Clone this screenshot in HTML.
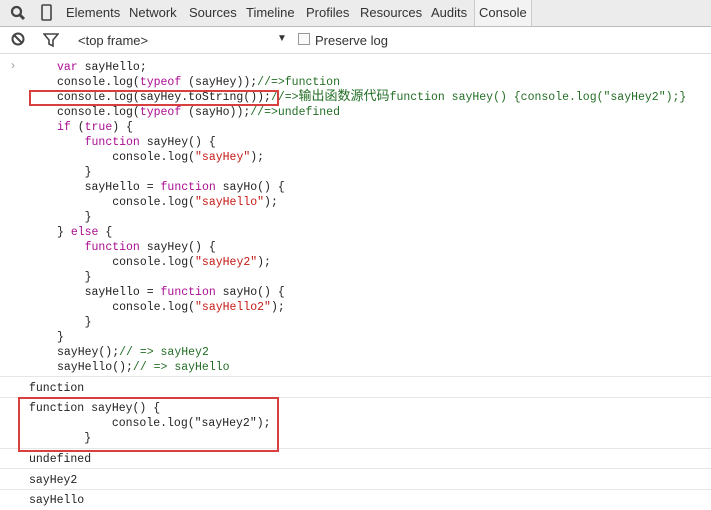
<!DOCTYPE html><html><head><style>
body{margin:0;width:711px;height:505px;overflow:hidden;background:#fff;font-family:"Liberation Sans",sans-serif;position:relative}
.tab{position:absolute;top:0;left:0;width:711px;height:26px;background:#ececec;border-bottom:1px solid #bcbcbc}
.tab span{position:absolute;top:5px;font-size:13px;color:#333}
.tb{position:absolute;top:27px;left:0;width:711px;height:26px;border-bottom:1px solid #ddd}
pre{margin:0;font-family:"Liberation Mono",monospace;font-size:11.5px;line-height:15px;color:#222}
.k{color:#aa0d91}.c{color:#236e25}.s{color:#c41a16}
.z{font-family:"Noto Sans CJK SC",sans-serif;font-size:13px;line-height:0}
.code{position:absolute;left:57px;top:60px}
.row{position:absolute;left:0;width:711px;border-top:1px solid #e6e6e6}
.row pre{position:absolute;left:29px}
.box{position:absolute;border:2px solid #d84040}
</style></head><body>
<div class="tab">
<svg style="position:absolute;left:10px;top:5px" width="16" height="16"><circle cx="6.5" cy="6.5" r="4.5" fill="none" stroke="#444" stroke-width="2.2"/><line x1="10" y1="10" x2="14" y2="14" stroke="#444" stroke-width="3"/></svg>
<svg style="position:absolute;left:41px;top:4px" width="12" height="18"><rect x="1" y="1" width="9" height="15" rx="1" fill="none" stroke="#444" stroke-width="1.6"/></svg>
<span style="left:66px">Elements</span><span style="left:129px">Network</span><span style="left:189px">Sources</span><span style="left:246px">Timeline</span><span style="left:306px">Profiles</span><span style="left:360px">Resources</span><span style="left:431px">Audits</span>
<div style="position:absolute;left:474px;top:0;width:56px;height:26px;background:#f3f3f3;border-left:1px solid #ccc;border-right:1px solid #ccc"></div><span style="left:479px">Console</span>
</div>
<div class="tb">
<svg style="position:absolute;left:11px;top:5px" width="16" height="16"><circle cx="7" cy="7" r="5.5" fill="none" stroke="#444" stroke-width="2"/><line x1="3" y1="3" x2="11" y2="11" stroke="#444" stroke-width="2"/></svg>
<svg style="position:absolute;left:43px;top:5px" width="16" height="16"><path d="M1 2H15L10 8V14L6 12V8Z" fill="none" stroke="#444" stroke-width="1.6"/></svg>
<span style="position:absolute;left:78px;top:6px;font-size:13px;color:#333">&lt;top frame&gt;</span>
<span style="position:absolute;left:277px;top:6px;font-size:10px;color:#333">▼</span>
<div style="position:absolute;left:298px;top:6px;width:10px;height:10px;border:1px solid #999;background:#fafafa"></div>
<span style="position:absolute;left:315px;top:6px;font-size:13px;color:#333">Preserve log</span>
</div>
<span style="position:absolute;left:11px;top:58px;color:#999;font-size:12px">›</span>
<pre class="code"><span class="k">var</span> sayHello;
console.log(<span class="k">typeof</span> (sayHey));<span class="c">//=>function</span>
console.log(sayHey.toString());<span class="c">//=><span class="z">输出函数源代码</span>function sayHey() {console.log("sayHey2");}</span>
console.log(<span class="k">typeof</span> (sayHo));<span class="c">//=>undefined</span>
<span class="k">if</span> (<span class="k">true</span>) {
    <span class="k">function</span> sayHey() {
        console.log(<span class="s">"sayHey"</span>);
    }
    sayHello = <span class="k">function</span> sayHo() {
        console.log(<span class="s">"sayHello"</span>);
    }
} <span class="k">else</span> {
    <span class="k">function</span> sayHey() {
        console.log(<span class="s">"sayHey2"</span>);
    }
    sayHello = <span class="k">function</span> sayHo() {
        console.log(<span class="s">"sayHello2"</span>);
    }
}
sayHey();<span class="c">// => sayHey2</span>
sayHello();<span class="c">// => sayHello</span></pre>
<div class="row" style="top:376px;height:20px"><pre style="top:4px">function</pre></div>
<div class="row" style="top:397px;height:50px"><pre style="top:3px">function sayHey() {
            console.log("sayHey2");
        }</pre></div>
<div class="row" style="top:448px;height:20px"><pre style="top:3px">undefined</pre></div>
<div class="row" style="top:468px;height:20px"><pre style="top:4px">sayHey2</pre></div>
<div class="row" style="top:489px;height:20px"><pre style="top:3px">sayHello</pre></div>
<div class="box" style="left:29px;top:90px;width:246px;height:12px"></div>
<div class="box" style="left:18px;top:397px;width:257px;height:51px"></div>
</body></html>
